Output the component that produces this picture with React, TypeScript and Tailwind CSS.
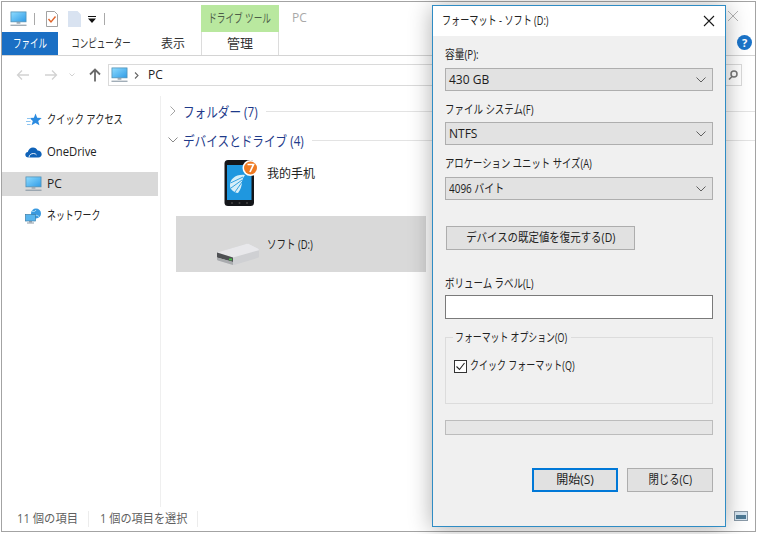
const jp = "font-['Open_Sans','Noto_Sans_CJK_JP',sans-serif]";

// narrow kana like the reference's UI font: the box keeps its width, only the glyphs squeeze
function Squeeze({ className, children }: { className: string; children: React.ReactNode }) {
  return <span className={`inline-block whitespace-nowrap ${className}`}>{children}</span>;
}

function PcIcon({ className }: { className?: string }) {
  return (
    <svg viewBox="0 0 18 16" className={className}>
      <defs>
        <linearGradient id="scr" x1="0" y1="0" x2="1" y2="1">
          <stop offset="0" stopColor="#8fdcff" />
          <stop offset="1" stopColor="#2f9be6" />
        </linearGradient>
      </defs>
      <rect x="1" y="0.5" width="16" height="10.5" fill="url(#scr)" stroke="#4f8fb5" strokeWidth="0.8" />
      <rect x="7" y="11" width="4" height="2" fill="#9aa9b5" />
      <rect x="0.5" y="14" width="17" height="1.2" fill="#8b9aa6" />
    </svg>
  );
}

function StarIcon() {
  return (
    <svg viewBox="0 0 16 15" className="w-4 h-[15px] shrink-0">
      <path d="M9.5 0.5l1.700 4.200 4.500.3-3.500 2.900 1.200 4.400-3.900-2.400-3.900 2.400 1.200-4.400L3.500 5l4.400-.3z" fill="#2b8be0" />
      <path d="M1 5.500h4M0 8.500h4.500M1 11.500h3.500" stroke="#8cc4f0" strokeWidth="1" />
    </svg>
  );
}

function CloudIcon() {
  return (
    <svg viewBox="0 0 17 11" className="w-[17px] h-[11px] shrink-0">
      <path d="M3.500 10.500C1.500 10.500 0.300 9.200 0.300 7.700c0-1.500 1.100-2.600 2.500-2.700C3.400 2.300 5.500 0.500 8 0.500c2.100 0 3.700 1.100 4.500 2.900 2.300 0 4.200 1.700 4.200 3.900 0 1.800-1.400 3.200-3.200 3.200z" fill="#0f62b8" />
      <path d="M4 10.500c0-2.500 2-4 4.500-4 1.300 0 2.400.5 3 1.400" fill="none" stroke="#fff" strokeWidth="0.9" />
    </svg>
  );
}

function NetIcon() {
  return (
    <svg viewBox="0 0 17 16" className="w-[17px] h-4 shrink-0">
      <circle cx="11" cy="5.500" r="5" fill="#3a9ae0" />
      <path d="M7 3c2 1 3 .5 4-1M9 8c1.500-1 3-1 5 .5" fill="none" stroke="#bfe6fb" strokeWidth="0.9" />
      <rect x="0.500" y="6.500" width="10" height="6.500" fill="#58b5ee" stroke="#3c7ea8" strokeWidth="0.7" />
      <rect x="4" y="13" width="3" height="1.500" fill="#8b9aa6" />
      <rect x="2" y="14.500" width="7" height="1" fill="#8b9aa6" />
    </svg>
  );
}

function PhoneIcon() {
  return (
    <svg viewBox="0 0 36 48" className="w-9 h-12 shrink-0">
      <rect x="0.500" y="1" width="29.500" height="46" rx="3.500" fill="#14161a" />
      <rect x="3" y="6" width="24.500" height="35" fill="#1f97df" />
      <path d="M6 27c-.5-7 6-12 15-11-1.500 2-2.500 4-3 6 0 5-1.500 9-4 12-4-.5-7.500-3-8-7z" fill="#d6eef8" />
      <path d="M6.500 24l12.500-6M7 29l11-8M11 33l7-10" stroke="#1f97df" strokeWidth="0.900" />
      <circle cx="8" cy="44" r="1" fill="#444" />
      <circle cx="15.500" cy="44" r="1" fill="#444" />
      <circle cx="23" cy="44" r="1" fill="#444" />
      <circle cx="26.500" cy="9" r="8" fill="#fff" />
      <circle cx="26.500" cy="9" r="6.500" fill="#ef7a22" />
      <path d="M23.500 5.500h6l-3.500 7.500" fill="none" stroke="#fff" strokeWidth="1.700" />
    </svg>
  );
}

function DriveIcon() {
  return (
    <svg viewBox="0 0 44 23" className="w-11 h-[23px] shrink-0">
      <path d="M1 9.500L30 1c1-.3 2-.3 3 0l9 4.500c.7.4 1 1 1 1.700v6.300c0 .7-.4 1-1 1.300L19 21.800c-1 .3-2 .3-3 0L2 17.500c-.7-.2-1-.7-1-1.300z" fill="#cfd0d3" />
      <path d="M1 9.500L30 1c1-.3 2-.3 3 0l9 4.500c.7.4 1 1 1 1.700L17 14.500z" fill="#e8e8eb" />
      <path d="M1 9.500l16 5v4.500L1 14.500z" fill="#4f5154" />
      <path d="M1 14.500L17 19v3L2 17.500c-.7-.2-1-.7-1-1.300z" fill="#a9abae" />
      <rect x="13" y="15.500" width="3" height="1.800" fill="#49c24a" />
    </svg>
  );
}

function Chevron() {
  return (
    <svg viewBox="0 0 10 6" className="w-[10px] h-[6px] shrink-0">
      <path d="M0.500 0.500L5 5l4.500-4.500" fill="none" stroke="#5f5f5f" strokeWidth="1" />
    </svg>
  );
}

function SelectBox({ children }: { children: React.ReactNode }) {
  return (
    <div className="h-[23px] bg-[#e2e2e2] border border-[#aeaeae] flex items-center justify-between pl-[3px] pr-[6px] text-[12px] text-[#1c1c1c]">
      <span>{children}</span>
      <Chevron />
    </div>
  );
}

function NavItem({ icon, children, active }: { icon: React.ReactNode; children: React.ReactNode; active?: boolean }) {
  return (
    <div className={`h-6 mb-2 flex items-center text-[12px] text-[#222] ${active ? "bg-[#d9d9d9]" : ""}`}>
      <div className="w-[43px] flex justify-end pr-[3px] shrink-0">{icon}</div>
      <span className="ml-[2px]">{children}</span>
    </div>
  );
}

function FormatDialog() {
  return (
    <div className={`absolute left-[432px] top-[5px] w-[294px] h-[522px] border border-[#2f8cc4] bg-[#f0f0f0] shadow-[0_2px_22px_rgba(0,0,0,0.32)] flex flex-col text-[#222] ${jp}`}>
      <div className="h-[30px] shrink-0 bg-white flex items-center justify-between pl-[9px] pr-[10px] text-[12px]">
        <Squeeze className="origin-left scale-x-[0.76]">フォーマット - ソフト (D:)</Squeeze>
        <svg viewBox="0 0 12 12" className="w-3 h-3">
          <path d="M1 1l10 10M11 1L1 11" stroke="#1a1a1a" strokeWidth="1.100" />
        </svg>
      </div>
      <div className="flex flex-col px-3 text-[12px]">
        <div className="h-4 mt-[11px] leading-4"><Squeeze className="origin-left scale-x-[0.81]">容量(P):</Squeeze></div>
        <div className="mt-[5px]"><SelectBox>430 GB</SelectBox></div>
        <div className="h-4 mt-[11px] leading-4"><Squeeze className="origin-left scale-x-[0.79]">ファイル システム(F)</Squeeze></div>
        <div className="mt-1"><SelectBox>NTFS</SelectBox></div>
        <div className="h-4 mt-[11px] leading-4"><Squeeze className="origin-left scale-x-[0.78]">アロケーション ユニット サイズ(A)</Squeeze></div>
        <div className="mt-[5px]"><SelectBox><Squeeze className="origin-left scale-x-[0.83]">4096 バイト</Squeeze></SelectBox></div>
        <button className="mt-[26px] ml-px w-[189px] h-6 bg-[#e1e1e1] border border-[#adadad] text-[12px]"><Squeeze className="scale-x-[0.87]">デバイスの既定値を復元する(D)</Squeeze></button>
        <div className="h-4 mt-[26px] leading-4"><Squeeze className="origin-left scale-x-[0.79]">ボリューム ラベル(L)</Squeeze></div>
        <div className="mt-[3px] h-6 bg-white border border-[#7a7a7a]" />
        <div className="relative mt-[18px] h-[67px] border border-[#dcdcdc] pt-[19px] pl-2">
          <span className="absolute left-[7px] -top-2 h-4 w-[118px] leading-4 px-[2px] bg-[#f0f0f0]"><Squeeze className="origin-left scale-x-[0.74]">フォーマット オプション(O)</Squeeze></span>
          <div className="flex items-center gap-[3px]">
            <div className="w-[13px] h-[13px] bg-white border border-[#333] flex items-center justify-center">
              <svg viewBox="0 0 11 11" className="w-[11px] h-[11px]">
                <path d="M1.500 5.500l3 3 5-6.500" fill="none" stroke="#222" strokeWidth="1.100" />
              </svg>
            </div>
            <Squeeze className="origin-left scale-x-[0.75]">クイック フォーマット(Q)</Squeeze>
          </div>
        </div>
        <div className="mt-4 h-[15px] bg-[#e6e6e6] border border-[#bcbcbc]" />
        <div className="mt-[33px] flex justify-end gap-[9px]">
          <button className="w-[86px] h-6 bg-[#e1e1e1] border-2 border-[#0078d7] text-[12px]">開始(S)</button>
          <button className="w-[86px] h-6 bg-[#e1e1e1] border border-[#adadad] text-[12px]"><Squeeze className="scale-x-[0.86]">閉じる(C)</Squeeze></button>
        </div>
      </div>
    </div>
  );
}

export default function App() {
  return (
    <div className={`relative w-[758px] h-[534px] bg-white overflow-hidden ${jp}`}>
      <div className="ml-px mt-px w-[755px] h-[531px] border border-[#a3a3a3] flex flex-col">
        {/* title bar */}
        <div className="h-[30px] flex items-end shrink-0">
          <div className="h-[26px] w-[199px] flex items-center pl-[8px] shrink-0">
            <PcIcon className="w-[17px] h-[16px]" />
            <div className="ml-[7px] w-px h-3 bg-[#a9a9a9]" />
            <svg viewBox="0 0 12 16" className="ml-[11px] w-3 h-4">
              <path d="M0.500 0.500h8l3 3v12H0.500z" fill="#fff" stroke="#8a8a8a" strokeWidth="0.800" />
              <path d="M2.500 8l2.500 3 4.500-5.500" fill="none" stroke="#e0642a" strokeWidth="1.400" />
            </svg>
            <svg viewBox="0 0 13 16" className="ml-[10px] w-[13px] h-4">
              <path d="M0 0h9.500l3.500 3.500V16H0z" fill="#d9e3f1" />
            </svg>
            <svg viewBox="0 0 8 7" className="ml-[7px] w-2 h-[7px]">
              <path d="M0 0h8v1H0zM0 2.500h8L4 7z" fill="#111" />
            </svg>
            <div className="ml-[8px] w-px h-3 bg-[#a9a9a9]" />
          </div>
          <div className="h-[27px] w-[78px] bg-[#b9e89f] flex items-center justify-center text-[12px] text-[#4d5d48] shrink-0 whitespace-nowrap"><Squeeze className="scale-x-[0.72]">ドライブ ツール</Squeeze></div>
          <span className="ml-[13px] mb-[5px] text-[12px] text-[#a8a8a8]">PC</span>
          <svg viewBox="0 0 12 12" className="ml-auto mr-[16px] mb-[10px] w-3 h-3">
            <path d="M1 1l10 10M11 1L1 11" stroke="#b5b5b5" strokeWidth="1" />
          </svg>
        </div>
        {/* ribbon tabs */}
        <div className="h-[24px] flex border-b border-[#d4d4d4] text-[12px] text-[#333] shrink-0">
          <div className="w-[56px] bg-[#1a6fc4] text-white flex items-center justify-center"><Squeeze className="scale-x-[0.71]">ファイル</Squeeze></div>
          <div className="w-[87px] flex items-center justify-center"><Squeeze className="scale-x-[0.71]">コンピューター</Squeeze></div>
          <div className="w-[56px] flex items-center justify-center">表示</div>
          <div className="w-[78px] border-x border-[#dcdcdc] flex items-center justify-center text-[13px]">管理</div>
          <div className="ml-auto mr-[3px] mt-[3px] w-[15px] h-[15px] rounded-full bg-[#1b74c9] text-white text-[11px] font-bold leading-[15px] text-center">?</div>
        </div>
        {/* address bar */}
        <div className="h-[40px] flex items-start pt-[8px] shrink-0">
          <div className="h-[22px] w-[106px] flex items-center pl-[14px] gap-[14px] shrink-0">
            <svg viewBox="0 0 14 12" className="w-[14px] h-3"><path d="M13 6H1.500M6 1.500L1.500 6 6 10.500" fill="none" stroke="#d2d2d2" strokeWidth="1.300" /></svg>
            <svg viewBox="0 0 14 12" className="w-[14px] h-3"><path d="M1 6h11.500M8 1.500L12.500 6 8 10.500" fill="none" stroke="#d2d2d2" strokeWidth="1.300" /></svg>
            <svg viewBox="0 0 6 4" className="-ml-[3px] w-[6px] h-1"><path d="M0.500 0.500L3 3l2.500-2.500" fill="none" stroke="#d2d2d2" /></svg>
            <svg viewBox="0 0 12 14" className="ml-0 w-3 h-[14px]"><path d="M6 13.500V1.500M1 6.500l5-5 5 5" fill="none" stroke="#6a6a6a" strokeWidth="1.800" /></svg>
          </div>
          <div className="w-[634px] h-[22px] border border-[#dadada] flex items-center pl-[2px] text-[12px] text-[#222]">
            <PcIcon className="w-[17px] h-[16px]" />
            <svg viewBox="0 0 5 7" className="ml-[6px] w-[5px] h-[7px]"><path d="M1 .5l3 3-3 3" fill="none" stroke="#666" strokeWidth="1.100" /></svg>
            <span className="ml-[9px]">PC</span>
            <svg viewBox="0 0 10 10" className="ml-auto mr-[3px] w-[10px] h-[10px]"><circle cx="6" cy="4" r="3" fill="none" stroke="#777" strokeWidth="1.500" /><path d="M4 6.500L1 9.500" stroke="#777" strokeWidth="1.500" /></svg>
          </div>
        </div>
        {/* body */}
        <div className="flex-1 flex min-h-0">
          <div className="w-[156px] pt-[12px] shrink-0">
            <NavItem icon={<StarIcon />}><Squeeze className="origin-left scale-x-[0.77]">クイック アクセス</Squeeze></NavItem>
            <NavItem icon={<CloudIcon />}><Squeeze className="origin-left scale-x-[0.94]">OneDrive</Squeeze></NavItem>
            <NavItem icon={<PcIcon className="w-[17px] h-[16px]" />} active>PC</NavItem>
            <NavItem icon={<NetIcon />}><Squeeze className="origin-left scale-x-[0.74]">ネットワーク</Squeeze></NavItem>
          </div>
          <div className="flex-1 border-l border-[#efefef] ml-[2px] pl-[9px] pt-[5px] flex flex-col min-w-0">
            <div className="h-5 flex items-center text-[14px] text-[#1e3a8a]">
              <svg viewBox="0 0 6 10" className="w-[6px] h-[10px] shrink-0"><path d="M.5.500L5 5 .5 9.500" fill="none" stroke="#a5a5a5" /></svg>
              <Squeeze className="ml-[7px] -mr-[15px] origin-left scale-x-[0.83]">フォルダー (7)</Squeeze>
              <div className="ml-2 flex-1 h-px bg-[#e3e3e3]" />
            </div>
            <div className="h-5 mt-[9px] -ml-[2px] flex items-center text-[14px] text-[#1e3a8a]">
              <svg viewBox="0 0 10 6" className="w-[10px] h-[6px] shrink-0"><path d="M.5.500L5 5 9.500.500" fill="none" stroke="#8a8a8a" /></svg>
              <Squeeze className="ml-[5px] -mr-[24px] origin-left scale-x-[0.83]">デバイスとドライブ (4)</Squeeze>
              <div className="ml-2 flex-1 h-px bg-[#e3e3e3]" />
            </div>
            <div className="h-12 mt-[9px] pl-[54px] flex items-start text-[12px] text-[#222]">
              <PhoneIcon />
              <span className="ml-[7px] mt-[6px]">我的手机</span>
            </div>
            <div className="mt-[9px] ml-[6px] w-[250px] h-14 bg-[#d9d9d9] flex text-[12px] text-[#222] pl-[40px]">
              <div className="pt-[27px]"><DriveIcon /></div>
              <Squeeze className="ml-[7px] mt-[20px] h-fit origin-left scale-x-[0.79]">ソフト (D:)</Squeeze>
            </div>
          </div>
        </div>
        {/* status bar */}
        <div className="h-[24px] flex items-center text-[12px] text-[#5f5f5f] shrink-0">
          <Squeeze className="ml-[15px] origin-left scale-x-[0.94]">11 個の項目</Squeeze>
          <div className="ml-[6px] w-px h-4 bg-[#ececec]" />
          <Squeeze className="ml-[11px] origin-left scale-x-[0.93]">1 個の項目を選択</Squeeze>
          <div className="ml-[3px] w-px h-4 bg-[#ececec]" />
          <svg viewBox="0 0 14 10" className="ml-auto mr-[7px] mb-[6px] w-[14px] h-[10px]">
            <rect x=".5" y=".5" width="13" height="9" fill="#d6e6f2" stroke="#8a9aa8" />
            <rect x="2" y="4" width="10" height="4" fill="#4d7a96" />
          </svg>
        </div>
      </div>
      <FormatDialog />
    </div>
  );
}
